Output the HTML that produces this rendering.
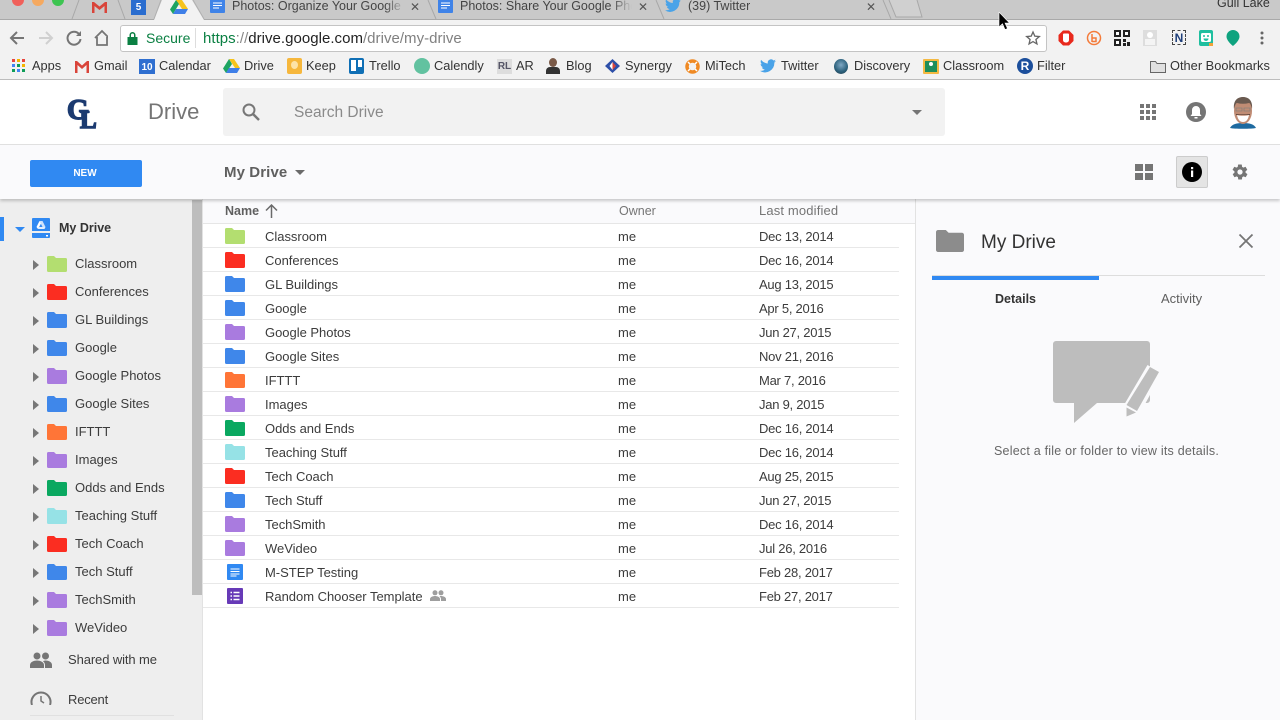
<!DOCTYPE html>
<html lang="en"><head><meta charset="utf-8"><title>My Drive - Google Drive</title>
<style>
html,body{margin:0;padding:0;width:1280px;height:720px;overflow:hidden;background:#fff;font-family:"Liberation Sans",sans-serif;color:#333}
*{box-sizing:border-box}
.a,.t,svg.i{position:absolute}
.t{white-space:nowrap}
.bk{position:absolute;top:56px;height:20px;line-height:20px;font-size:12.8px;color:#333;white-space:nowrap}
.tab{position:absolute;top:-1px;line-height:14px;font-size:12.5px;color:#444;white-space:nowrap;overflow:hidden}
.x{position:absolute;top:1px;font-size:12px;line-height:12px;color:#555}
.row{position:absolute;left:203px;width:696px;height:24px;border-bottom:1px solid #e8e8e8;line-height:26px;font-size:13px;color:#3c3c3c}
.row b{position:absolute;font-weight:normal;white-space:nowrap}
.row .n{left:62px;letter-spacing:-.02px}.row .o{left:415px}.row .d{left:556px;letter-spacing:-.25px}
.row svg{position:absolute;left:22px;top:4px}
.s{position:absolute;left:0;width:192px;height:28px;line-height:30px;font-size:13px;color:#3c3c3c}
.s i{position:absolute;left:33px;top:11px;width:0;height:0;border-left:6px solid #777;border-top:5px solid transparent;border-bottom:5px solid transparent}
.s svg{position:absolute;left:47px;top:7px}
.s span{position:absolute;left:75px;white-space:nowrap}
</style></head><body>
<svg width="0" height="0" style="position:absolute"><defs>
<symbol id="f" viewBox="0 0 20 16"><path d="M1.500 0H7l2 2h9.500A1.500 1.500 0 0 1 20 3.500v11a1.500 1.500 0 0 1-1.500 1.500h-17A1.500 1.500 0 0 1 0 14.500V1.500A1.500 1.500 0 0 1 1.500 0z" fill="currentColor"/></symbol>
</defs></svg>

<!-- tab strip -->
<div class="a" style="left:0;top:0;width:1280px;height:20px;background:#c9c9c9;border-bottom:1px solid #a9a9a9"></div>
<div class="a" style="left:12px;top:-6px;width:12px;height:12px;border-radius:50%;background:#f0605a"></div>
<div class="a" style="left:32px;top:-6px;width:12px;height:12px;border-radius:50%;background:#f5a960"></div>
<div class="a" style="left:52px;top:-6px;width:12px;height:12px;border-radius:50%;background:#3dc451"></div>
<svg class="i" style="left:0;top:0" width="930" height="20" fill="none" stroke="#a8a8a8">
<path d="M72 19L79 0M118 0L125 19M428 0L436 19M656 0L664 19M883 0L891 19"/>
<path d="M889 0L896 17H922L917 0" fill="#d0d0d0"/>
<path d="M154 20L162 0H192L204 20z" fill="#f2f2f2" stroke="none"/>
<path d="M154 19L161 0M193 0L204 19" stroke="#b0b0b0"/>
</svg>
<svg class="i" style="left:92px;top:1px" width="15" height="12"><path d="M0 1h2l5.500 4.500L13 1h2v11h-2.500V5L7.500 9 2.500 5v7H0z" fill="#d9443a"/></svg>
<div class="a" style="left:131px;top:0;width:15px;height:15px;background:#2a6dcf;color:#fff;font-size:10px;line-height:15px;text-align:center;font-weight:bold">5</div>
<svg class="i" style="left:170px;top:0" width="18" height="14"><path d="M6 0h6l6 9h-6z" fill="#f6c31c"/><path d="M6 0L0 9.500 3 14l6-10z" fill="#1da462"/><path d="M3 14h12l3-5H6z" fill="#3f7fe8"/></svg>
<svg class="i" style="left:210px;top:0" width="15" height="14"><path d="M0 0h15v12a1 1 0 0 1-1 1H1a1 1 0 0 1-1-1z" fill="#3f83e8"/><path d="M3 3h9M3 5.500h9M3 8h6" stroke="#fff"/></svg>
<div class="tab" style="left:232px;width:170px">Photos: Organize Your Google</div>
<div class="a" style="left:385px;top:0;width:20px;height:14px;background:linear-gradient(90deg,rgba(201,201,201,0),#c9c9c9)"></div>
<div class="x" style="left:410px">✕</div>
<svg class="i" style="left:438px;top:0" width="15" height="14"><path d="M0 0h15v12a1 1 0 0 1-1 1H1a1 1 0 0 1-1-1z" fill="#3f83e8"/><path d="M3 3h9M3 5.500h9M3 8h6" stroke="#fff"/></svg>
<div class="tab" style="left:460px;width:172px">Photos: Share Your Google Pho</div>
<div class="a" style="left:612px;top:0;width:20px;height:14px;background:linear-gradient(90deg,rgba(201,201,201,0),#c9c9c9)"></div>
<div class="x" style="left:638px">✕</div>
<svg class="i" style="left:665px;top:-2px" width="16" height="15" viewBox="0 0 24 20"><path d="M24 2.400a10 10 0 0 1-2.800.8A5 5 0 0 0 23.300.500a10 10 0 0 1-3.100 1.200 4.900 4.900 0 0 0-8.400 4.500A14 14 0 0 1 1.700.900a4.900 4.900 0 0 0 1.500 6.600 5 5 0 0 1-2.200-.600 4.900 4.900 0 0 0 3.900 4.900 5 5 0 0 1-2.200.1 4.900 4.900 0 0 0 4.600 3.400A10 10 0 0 1 0 17.300 14 14 0 0 0 21.500 4.900c1-.7 1.800-1.500 2.500-2.500z" fill="#4aa3e8"/></svg>
<div class="tab" style="left:688px">(39) Twitter</div>
<div class="x" style="left:866px">✕</div>
<div class="t" style="left:1217px;top:-4px;font-size:12.500px;line-height:14px;color:#333">Gull Lake</div>

<!-- address bar -->
<div class="a" style="left:0;top:20px;width:1280px;height:60px;background:#f2f2f2;border-bottom:1px solid #bdbdbd"></div>
<svg class="i" style="left:8px;top:28px" width="100" height="20" fill="none" stroke="#757575" stroke-width="2">
<path d="M16 10H3M9 4l-6 6 6 6"/>
<path d="M31 10h13M38 4l6 6-6 6" stroke="#d0d0d0"/>
<path d="M71 6a6.500 6.500 0 1 0 1.500 5"/><path d="M73 3v5h-5" fill="#757575" stroke="none"/>
<path d="M87 10l7-7 7 7M89 9v8h10V9" stroke-width="1.800"/>
</svg>
<div class="a" style="left:120px;top:25px;width:927px;height:27px;background:#fff;border:1px solid #c4c4c4;border-radius:3px"></div>
<svg class="i" style="left:127px;top:31px" width="11" height="14"><path d="M2.500 6V4a3 3 0 0 1 6 0v2H10.500v8H.5V6zM4 6h3V4a1.500 1.500 0 0 0-3 0z" fill="#0b8043" fill-rule="evenodd"/></svg>
<div class="t" style="left:146px;top:30px;line-height:17px;font-size:14px;color:#0b8043">Secure</div>
<div class="a" style="left:195px;top:28px;width:1px;height:20px;background:#ddd"></div>
<div class="t" style="left:203px;top:30px;line-height:17px;font-size:15px;letter-spacing:.03px;color:#0b8043">https<span style="color:#888">://</span><span style="color:#222">drive.google.com</span><span style="color:#808080">/drive/my-drive</span></div>
<svg class="i" style="left:1025px;top:30px" width="16" height="16" viewBox="0 0 24 24"><path d="M12 3l2.700 6.200 6.800.600-5.100 4.500 1.500 6.600L12 17.400l-5.900 3.500 1.500-6.600L2.500 9.800l6.800-.600z" fill="none" stroke="#666" stroke-width="2"/></svg>

<!-- extensions -->
<svg class="i" style="left:1058px;top:30px" width="16" height="16"><path d="M5 .5h6L15.500 5v6L11 15.500H5L.5 11V5z" fill="#e8291c"/><path d="M5 4.500a1 1 0 0 1 1-1h4a1 1 0 0 1 1 1V10a2.500 2.500 0 0 1-2.500 2.500h-1A2.500 2.500 0 0 1 5 10z" fill="#fff"/></svg>
<svg class="i" style="left:1086px;top:30px" width="16" height="16"><circle cx="8" cy="8" r="6.500" fill="none" stroke="#f47b3a" stroke-width="1.500"/><path d="M6 4v8M6 8h4v3.500H6" fill="none" stroke="#f47b3a" stroke-width="1.500"/></svg>
<svg class="i" style="left:1114px;top:30px" width="16" height="16"><path d="M0 0h7v7H0zM9 0h7v7H9zM0 9h7v7H0zM9 9h3v3H9zM13 12h3v4h-3zM9 13h3v3H9z" fill="#222"/><path d="M2 2h3v3H2zM11 2h3v3h-3zM2 11h3v3H2z" fill="#fff"/></svg>
<div class="a" style="left:1143px;top:30px;width:14px;height:16px;background:#ddd"></div>
<div class="a" style="left:1147px;top:32px;width:6px;height:6px;border-radius:50%;background:#fff"></div>
<div class="a" style="left:1145px;top:39px;width:10px;height:6px;background:#f4f4f4"></div>
<div class="a" style="left:1172px;top:30px;width:14px;height:15px;border:1px dashed #444;color:#1f3f7a;font-size:12px;font-weight:bold;line-height:14px;text-align:center">N</div>
<svg class="i" style="left:1198px;top:30px" width="16" height="16"><rect x="1" width="14" height="16" rx="2" fill="#1fbf9f"/><rect x="3" y="3" width="10" height="9" rx="1.500" fill="#fff"/><circle cx="6" cy="6" r="1" fill="#1fbf9f"/><circle cx="10" cy="6" r="1" fill="#1fbf9f"/><path d="M5.500 8.500h5a2.500 2.500 0 0 1-5 0z" fill="#1fbf9f"/><path d="M11 13h4v3h-4z" fill="#f1a33a"/></svg>
<svg class="i" style="left:1226px;top:30px" width="14" height="16"><path d="M7 0a6.500 6.500 0 0 1 6.500 6.500C13.500 11 7 16 7 16S.5 11 .5 6.500A6.500 6.500 0 0 1 7 0z" fill="#0fa37f"/></svg>
<svg class="i" style="left:1260px;top:30px" width="4" height="16"><circle cx="2" cy="3" r="1.500" fill="#666"/><circle cx="2" cy="8" r="1.500" fill="#666"/><circle cx="2" cy="13" r="1.500" fill="#666"/></svg>

<!-- cursor -->
<svg class="i" style="left:998px;top:12px;z-index:9" width="12" height="19"><path d="M1 0v15l3.500-3.300L7 17.500l2.500-1-2.500-5.500h4.500z" fill="#000" stroke="#fff" stroke-width=".6"/></svg>

<!-- bookmarks -->
<svg class="i" style="left:12px;top:59px" width="14" height="14"><rect width="3" height="3" fill="#e8453c"/><rect x="5" width="3" height="3" fill="#f4b400"/><rect x="10" width="3" height="3" fill="#e8453c"/><rect y="5" width="3" height="3" fill="#4285f4"/><rect x="5" y="5" width="3" height="3" fill="#0f9d58"/><rect x="10" y="5" width="3" height="3" fill="#f4b400"/><rect y="10" width="3" height="3" fill="#0f9d58"/><rect x="5" y="10" width="3" height="3" fill="#4285f4"/><rect x="10" y="10" width="3" height="3" fill="#0f9d58"/></svg>
<div class="bk" style="left:32px">Apps</div>
<svg class="i" style="left:75px;top:60px" width="14" height="13"><path d="M0 1h2l5 4.500L12 1h2v12h-2.500V5L7 9 2.500 5v8H0z" fill="#d9443a"/></svg>
<div class="bk" style="left:94px">Gmail</div>
<div class="a" style="left:139px;top:59px;width:16px;height:15px;background:#2f6fd0;color:#fff;font-size:10px;font-weight:bold;line-height:17px;text-align:center">10</div>
<div class="bk" style="left:159px">Calendar</div>
<svg class="i" style="left:223px;top:59px" width="17" height="14"><path d="M6 0h5l6 9h-5z" fill="#f6c31c"/><path d="M6 0L0 9.500 3 14l6-9z" fill="#1da462"/><path d="M3 14h11l3-5H6z" fill="#3f7fe8"/></svg>
<div class="bk" style="left:244px">Drive</div>
<div class="a" style="left:287px;top:58px;width:15px;height:16px;background:#f6b73c;border-radius:2px"></div>
<div class="a" style="left:291px;top:61px;width:7px;height:8px;border-radius:50%;background:#fde3a8"></div>
<div class="bk" style="left:306px">Keep</div>
<div class="a" style="left:349px;top:58px;width:15px;height:16px;background:#0f6fb5;border-radius:2px"></div>
<div class="a" style="left:351px;top:60px;width:5px;height:11px;background:#fff"></div>
<div class="a" style="left:358px;top:60px;width:4px;height:7px;background:#fff"></div>
<div class="bk" style="left:369px">Trello</div>
<div class="a" style="left:414px;top:58px;width:16px;height:16px;border-radius:50%;background:#62c2a0"></div>
<div class="bk" style="left:434px">Calendly</div>
<div class="a" style="left:497px;top:59px;width:15px;height:15px;background:#ddd;color:#556;font-size:10px;font-weight:bold;line-height:16px;text-align:center">RL</div>
<div class="bk" style="left:516px">AR</div>
<div class="a" style="left:549px;top:58px;width:8px;height:9px;border-radius:50%;background:#7a5a48"></div>
<div class="a" style="left:546px;top:67px;width:14px;height:7px;background:#333;border-radius:4px 4px 0 0"></div>
<div class="bk" style="left:566px">Blog</div>
<svg class="i" style="left:605px;top:59px" width="15" height="14"><path d="M7.500 0L15 7l-7.500 7L0 7z" fill="#2d4fa8"/><path d="M7.500 3L11 7l-3.500 4z" fill="#d9443a"/><path d="M7.500 3L4.500 7l3 4z" fill="#fff"/></svg>
<div class="bk" style="left:625px">Synergy</div>
<svg class="i" style="left:685px;top:59px" width="15" height="15"><circle cx="7.500" cy="7.500" r="5.500" fill="none" stroke="#f08a24" stroke-width="3.500"/><path d="M3 3l2 2M12 3l-2 2M3 12l2-2M12 12l-2-2" stroke="#fff" stroke-width="1.500"/></svg>
<div class="bk" style="left:705px">MiTech</div>
<svg class="i" style="left:760px;top:59px" width="16" height="14" viewBox="0 0 24 20"><path d="M24 2.400a10 10 0 0 1-2.800.8A5 5 0 0 0 23.300.500a10 10 0 0 1-3.100 1.200 4.900 4.900 0 0 0-8.400 4.500A14 14 0 0 1 1.700.900a4.900 4.900 0 0 0 1.500 6.600 5 5 0 0 1-2.200-.600 4.900 4.900 0 0 0 3.900 4.900 5 5 0 0 1-2.200.1 4.900 4.900 0 0 0 4.600 3.400A10 10 0 0 1 0 17.300 14 14 0 0 0 21.500 4.900c1-.7 1.800-1.500 2.500-2.500z" fill="#4aa3e8"/></svg>
<div class="bk" style="left:781px">Twitter</div>
<div class="a" style="left:834px;top:59px;width:14px;height:15px;border-radius:50%;background:radial-gradient(circle at 50% 40%,#7fa8c4,#2a5f7a 60%,#2b3d4a)"></div>
<div class="bk" style="left:854px">Discovery</div>
<div class="a" style="left:923px;top:59px;width:16px;height:15px;background:#f4b942;border-radius:1px"></div>
<div class="a" style="left:925px;top:61px;width:12px;height:11px;background:#1e8e5a"></div>
<div class="a" style="left:929px;top:62px;width:4px;height:4px;border-radius:50%;background:#fff"></div>
<div class="bk" style="left:943px">Classroom</div>
<div class="a" style="left:1017px;top:58px;width:16px;height:16px;border-radius:50%;background:#1c4f9c;color:#fff;font-weight:bold;font-size:12px;line-height:16px;text-align:center">R</div>
<div class="bk" style="left:1037px">Filter</div>
<svg class="i" style="left:1150px;top:60px" width="16" height="13"><path d="M.5 1.500h5l1.500 2h8.500v9H.500z" fill="#e0e0e0" stroke="#666"/></svg>
<div class="bk" style="left:1170px;letter-spacing:.02px">Other Bookmarks</div>

<!-- drive header -->
<div class="a" style="left:0;top:80px;width:1280px;height:65px;background:#fff;border-bottom:1px solid #e2e2e2"></div>
<svg class="i" style="left:62px;top:92px" width="40" height="42" font-family="Liberation Serif, serif" font-weight="bold" fill="#1b3a70" stroke="#1b3a70"><text x="5" y="27" font-size="28" stroke-width="1.500">G</text><text x="18" y="36" font-size="25" stroke-width="1.500">L</text></svg>
<div class="t" style="left:148px;top:99px;font-size:22px;line-height:26px;color:#757575">Drive</div>
<div class="a" style="left:223px;top:88px;width:722px;height:48px;background:#f2f2f2;border-radius:3px"></div>
<svg class="i" style="left:241px;top:102px" width="20" height="20" fill="none" stroke="#777" stroke-width="2"><circle cx="8" cy="8" r="5.500"/><path d="M12 12l6 6" stroke-width="2.400"/></svg>
<div class="t" style="left:294px;top:103px;font-size:15.500px;line-height:20px;color:#8a8a8a">Search Drive</div>
<div class="a" style="left:912px;top:110px;width:0;height:0;border-top:5px solid #757575;border-left:5px solid transparent;border-right:5px solid transparent"></div>
<svg class="i" style="left:1140px;top:104px" width="16" height="16" fill="#757575"><rect width="4" height="4"/><rect x="6" width="4" height="4"/><rect x="12" width="4" height="4"/><rect y="6" width="4" height="4"/><rect x="6" y="6" width="4" height="4"/><rect x="12" y="6" width="4" height="4"/><rect y="12" width="4" height="4"/><rect x="6" y="12" width="4" height="4"/><rect x="12" y="12" width="4" height="4"/></svg>
<svg class="i" style="left:1186px;top:102px" width="20" height="20"><circle cx="10" cy="10" r="10" fill="#757575"/><path d="M10 4a4 4 0 0 1 4 4v4l1.500 2h-11L6 12V8a4 4 0 0 1 4-4z" fill="#fff"/><rect x="8.500" y="15" width="3" height="1.500" fill="#fff"/></svg>
<svg class="i" style="left:1229px;top:96px" width="28" height="33"><path d="M1 32c2-4 7-5 13-5s11 1 13 5c-4 1-22 1-26 0z" fill="#1e6aa0"/><ellipse cx="14" cy="15" rx="9" ry="13" fill="#c08c74"/><path d="M5 13C4 4 9 1 14 1s10 3 9 12c-1-4-2-6-3-6-4 1-8 1-12 0-1 0-2 2-3 6z" fill="#6a5a50"/><path d="M7 12h6v3H7zM15 12h6v3h-6z" fill="none" stroke="#8a8078" stroke-width=".8"/><path d="M8 19c3 1 9 1 12 0-1 5-3 7-6 7s-5-2-6-7z" fill="#fff"/><path d="M7 18c2 .5 12 .5 14 0v1H7z" fill="#5c4238"/></svg>

<!-- toolbar -->
<div class="a" style="left:0;top:145px;width:1280px;height:54px;background:#fafafc;box-shadow:0 2px 3px rgba(0,0,0,.2);z-index:3"></div>
<div class="a" style="left:30px;top:160px;width:112px;height:27px;background:#3089f2;border-radius:2px;color:#fff;font-size:10px;font-weight:bold;line-height:28px;text-align:center;z-index:4;padding-right:2px">NEW</div>
<div class="t" style="left:224px;top:163px;font-size:15px;font-weight:bold;line-height:20px;color:#5f5f5f;z-index:4;letter-spacing:.1px">My Drive</div>
<div class="a" style="left:295px;top:170px;width:0;height:0;border-top:5px solid #6a6a6a;border-left:5px solid transparent;border-right:5px solid transparent;z-index:4"></div>
<svg class="i" style="left:1135px;top:164px;z-index:4" width="18" height="16" fill="#757575"><rect width="8" height="7"/><rect x="10" width="8" height="7"/><rect y="9" width="8" height="7"/><rect x="10" y="9" width="8" height="7"/></svg>
<div class="a" style="left:1176px;top:156px;width:32px;height:32px;background:#e4e4e4;border:1px solid #ccc;border-radius:2px;z-index:4"></div>
<svg class="i" style="left:1182px;top:162px;z-index:5" width="20" height="20"><circle cx="10" cy="10" r="10" fill="#000"/><rect x="9" y="8.500" width="2.200" height="6.500" fill="#fff"/><rect x="9" y="5" width="2.200" height="2.200" fill="#fff"/></svg>
<svg class="i" style="left:1231px;top:163px;z-index:4" width="18" height="18" viewBox="0 0 24 24"><path fill="#757575" d="M19.400 13a7.500 7.500 0 0 0 0-2l2.100-1.600a.5.500 0 0 0 .1-.6l-2-3.500a.5.500 0 0 0-.6-.2l-2.500 1a7.300 7.300 0 0 0-1.700-1l-.4-2.700a.5.500 0 0 0-.5-.4h-4a.5.500 0 0 0-.5.400l-.4 2.700a7.300 7.300 0 0 0-1.700 1l-2.500-1a.5.500 0 0 0-.6.2l-2 3.500a.5.500 0 0 0 .1.600L4.600 11a7.500 7.500 0 0 0 0 2l-2.100 1.600a.5.500 0 0 0-.1.600l2 3.500c.1.200.4.300.6.2l2.500-1c.5.400 1.100.7 1.700 1l.4 2.700c0 .2.200.4.500.4h4c.3 0 .5-.2.500-.4l.4-2.700c.6-.3 1.200-.6 1.700-1l2.500 1c.2.100.5 0 .6-.2l2-3.500a.5.500 0 0 0-.1-.6zM12 15.500a3.500 3.500 0 1 1 0-7 3.500 3.500 0 0 1 0 7z"/></svg>

<!-- sidebar -->
<div class="a" style="left:0;top:199px;width:203px;height:521px;background:#eee;border-right:1px solid #e2e2e2"></div>
<div class="a" style="left:192px;top:200px;width:10px;height:395px;background:#bdbdbd"></div>
<div class="a" style="left:0;top:217px;width:4px;height:24px;background:#3089f2"></div>
<div class="a" style="left:15px;top:227px;width:0;height:0;border-top:5px solid #3089f2;border-left:5px solid transparent;border-right:5px solid transparent"></div>
<svg class="i" style="left:32px;top:218px" width="18" height="20"><path d="M1 0h16a1 1 0 0 1 1 1v12H0V1a1 1 0 0 1 1-1z" fill="#3089f2"/><path d="M0 15h18v4a1 1 0 0 1-1 1H1a1 1 0 0 1-1-1z" fill="#3089f2"/><rect x="14" y="17" width="2" height="1.500" fill="#fff"/><path d="M7.500 3h3l3 6h-3z" fill="#cfe2fb"/><path d="M7.500 3L4.500 9l1.500 2 3-5.500z" fill="#fff"/><path d="M6 11h6.500l1-2H7z" fill="#e3eefd"/></svg>
<div class="t" style="left:59px;top:219px;font-size:12.500px;font-weight:bold;line-height:18px;color:#333">My Drive</div>

<div class="s" style="top:249px"><i></i><svg width="20" height="16" color="#b3de70"><use href="#f"/></svg><span>Classroom</span></div>
<div class="s" style="top:277px"><i></i><svg width="20" height="16" color="#fb2d21"><use href="#f"/></svg><span>Conferences</span></div>
<div class="s" style="top:305px"><i></i><svg width="20" height="16" color="#3f87ea"><use href="#f"/></svg><span>GL Buildings</span></div>
<div class="s" style="top:333px"><i></i><svg width="20" height="16" color="#3f87ea"><use href="#f"/></svg><span>Google</span></div>
<div class="s" style="top:361px"><i></i><svg width="20" height="16" color="#a97bdf"><use href="#f"/></svg><span>Google Photos</span></div>
<div class="s" style="top:389px"><i></i><svg width="20" height="16" color="#3f87ea"><use href="#f"/></svg><span>Google Sites</span></div>
<div class="s" style="top:417px"><i></i><svg width="20" height="16" color="#ff7537"><use href="#f"/></svg><span>IFTTT</span></div>
<div class="s" style="top:445px"><i></i><svg width="20" height="16" color="#a97bdf"><use href="#f"/></svg><span>Images</span></div>
<div class="s" style="top:473px"><i></i><svg width="20" height="16" color="#0aa860"><use href="#f"/></svg><span>Odds and Ends</span></div>
<div class="s" style="top:501px"><i></i><svg width="20" height="16" color="#96e2e6"><use href="#f"/></svg><span>Teaching Stuff</span></div>
<div class="s" style="top:529px"><i></i><svg width="20" height="16" color="#fb2d21"><use href="#f"/></svg><span>Tech Coach</span></div>
<div class="s" style="top:557px"><i></i><svg width="20" height="16" color="#3f87ea"><use href="#f"/></svg><span>Tech Stuff</span></div>
<div class="s" style="top:585px"><i></i><svg width="20" height="16" color="#a97bdf"><use href="#f"/></svg><span>TechSmith</span></div>
<div class="s" style="top:613px"><i></i><svg width="20" height="16" color="#a97bdf"><use href="#f"/></svg><span>WeVideo</span></div>

<svg class="i" style="left:30px;top:652px" width="22" height="16" fill="#757575"><circle cx="7" cy="4" r="3.500"/><circle cx="15.500" cy="4" r="3.500"/><path d="M0 16v-3c0-3 4-4.500 7-4.500s7 1.500 7 4.500v3z"/><path d="M15 16v-3c0-1.700-.8-3-2-3.800.9-.4 1.800-.7 2.500-.7 3 0 6.500 1.500 6.500 4.500v3z"/></svg>
<div class="t" style="left:68px;top:651px;font-size:13px;line-height:18px;color:#3c3c3c;letter-spacing:-.1px">Shared with me</div>
<svg class="i" style="left:30px;top:690px" width="22" height="15" fill="none" stroke="#757575" stroke-width="2"><path d="M2 15A9.500 9.500 0 1 1 20 15"/><path d="M11 6v5l3 2" stroke-width="1.500"/></svg>
<div class="t" style="left:68px;top:691px;font-size:13px;line-height:18px;color:#3c3c3c;letter-spacing:-.2px">Recent</div>
<div class="a" style="left:30px;top:715px;width:144px;height:1px;background:#e0e0e0"></div>

<!-- list header -->
<div class="a" style="left:203px;top:199px;width:712px;height:25px;background:#fafafc;border-bottom:1px solid #e6e6e6"></div>
<div class="t" style="left:225px;top:202px;font-size:12.500px;font-weight:bold;line-height:18px;color:#5f5f5f">Name</div>
<svg class="i" style="left:265px;top:204px" width="13" height="14" fill="none" stroke="#6a6a6a" stroke-width="1.500"><path d="M6.500 14V1M1 6.500L6.500 1 12 6.500"/></svg>
<div class="t" style="left:619px;top:202px;font-size:12.500px;line-height:18px;color:#757575">Owner</div>
<div class="t" style="left:759px;top:202px;font-size:13px;line-height:18px;color:#757575;letter-spacing:.15px">Last modified</div>

<!-- rows -->
<div class="row" style="top:224px"><svg width="20" height="16" color="#b3de70"><use href="#f"/></svg><b class="n">Classroom</b><b class="o">me</b><b class="d">Dec 13, 2014</b></div>
<div class="row" style="top:248px"><svg width="20" height="16" color="#fb2d21"><use href="#f"/></svg><b class="n">Conferences</b><b class="o">me</b><b class="d">Dec 16, 2014</b></div>
<div class="row" style="top:272px"><svg width="20" height="16" color="#3f87ea"><use href="#f"/></svg><b class="n">GL Buildings</b><b class="o">me</b><b class="d">Aug 13, 2015</b></div>
<div class="row" style="top:296px"><svg width="20" height="16" color="#3f87ea"><use href="#f"/></svg><b class="n">Google</b><b class="o">me</b><b class="d">Apr 5, 2016</b></div>
<div class="row" style="top:320px"><svg width="20" height="16" color="#a97bdf"><use href="#f"/></svg><b class="n">Google Photos</b><b class="o">me</b><b class="d">Jun 27, 2015</b></div>
<div class="row" style="top:344px"><svg width="20" height="16" color="#3f87ea"><use href="#f"/></svg><b class="n">Google Sites</b><b class="o">me</b><b class="d">Nov 21, 2016</b></div>
<div class="row" style="top:368px"><svg width="20" height="16" color="#ff7537"><use href="#f"/></svg><b class="n">IFTTT</b><b class="o">me</b><b class="d">Mar 7, 2016</b></div>
<div class="row" style="top:392px"><svg width="20" height="16" color="#a97bdf"><use href="#f"/></svg><b class="n">Images</b><b class="o">me</b><b class="d">Jan 9, 2015</b></div>
<div class="row" style="top:416px"><svg width="20" height="16" color="#0aa860"><use href="#f"/></svg><b class="n">Odds and Ends</b><b class="o">me</b><b class="d">Dec 16, 2014</b></div>
<div class="row" style="top:440px"><svg width="20" height="16" color="#96e2e6"><use href="#f"/></svg><b class="n">Teaching Stuff</b><b class="o">me</b><b class="d">Dec 16, 2014</b></div>
<div class="row" style="top:464px"><svg width="20" height="16" color="#fb2d21"><use href="#f"/></svg><b class="n">Tech Coach</b><b class="o">me</b><b class="d">Aug 25, 2015</b></div>
<div class="row" style="top:488px"><svg width="20" height="16" color="#3f87ea"><use href="#f"/></svg><b class="n">Tech Stuff</b><b class="o">me</b><b class="d">Jun 27, 2015</b></div>
<div class="row" style="top:512px"><svg width="20" height="16" color="#a97bdf"><use href="#f"/></svg><b class="n">TechSmith</b><b class="o">me</b><b class="d">Dec 16, 2014</b></div>
<div class="row" style="top:536px"><svg width="20" height="16" color="#a97bdf"><use href="#f"/></svg><b class="n">WeVideo</b><b class="o">me</b><b class="d">Jul 26, 2016</b></div>
<div class="row" style="top:560px"><svg width="16" height="16" style="left:24px;top:4px"><rect width="16" height="16" rx="1" fill="#3089f2"/><path d="M3.500 5h9M3.500 7.500h9M3.500 10h9M3.500 12h6" stroke="#fff" stroke-width="1"/></svg><b class="n">M-STEP Testing</b><b class="o">me</b><b class="d">Feb 28, 2017</b></div>
<div class="row" style="top:584px"><svg width="16" height="16" style="left:24px;top:4px"><rect width="16" height="16" rx="1" fill="#673ab7"/><path d="M6.500 4.500h6M6.500 8h6M6.500 11.500h6" stroke="#fff" stroke-width="1.400"/><path d="M3.500 4.500h1.500M3.500 8h1.500M3.500 11.500h1.500" stroke="#fff" stroke-width="1.400"/></svg><b class="n">Random Chooser Template</b><svg width="16" height="11" style="left:227px;top:6px" fill="#9e9e9e"><circle cx="5" cy="2.800" r="2.500"/><circle cx="11" cy="2.800" r="2.500"/><path d="M0 11V9c0-2 3-3 5-3s5 1 5 3v2z"/><path d="M11 11V9c0-1-.5-2-1.500-2.800.6-.2 1-.2 1.500-.2 2 0 5 1 5 3v2z"/></svg><b class="o">me</b><b class="d">Feb 27, 2017</b></div>

<!-- details -->
<div class="a" style="left:915px;top:199px;width:365px;height:521px;background:#fafafc;border-left:1px solid #e2e2e2"></div>
<svg class="i" style="left:936px;top:230px" width="28" height="22" viewBox="0 0 20 16" preserveAspectRatio="none" color="#8c8c8c"><use href="#f"/></svg>
<div class="t" style="left:981px;top:231px;font-size:19px;line-height:24px;color:#333">My Drive</div>
<svg class="i" style="left:1238px;top:233px" width="16" height="16" stroke="#757575" stroke-width="1.800"><path d="M1.500 1.500l13 13M14.500 1.500l-13 13"/></svg>
<div class="a" style="left:932px;top:275px;width:333px;height:1px;background:#ddd"></div>
<div class="a" style="left:932px;top:276px;width:167px;height:4px;background:#3089f2"></div>
<div class="t" style="left:995px;top:290px;font-size:12.500px;font-weight:bold;line-height:18px;color:#333">Details</div>
<div class="t" style="left:1161px;top:290px;font-size:13px;line-height:18px;color:#5f5f5f">Activity</div>
<svg class="i" style="left:1040px;top:330px" width="130" height="100" viewBox="1040 330 130 100">
<path d="M1056 341H1147a3 3 0 0 1 3 3V400a3 3 0 0 1-3 3H1097L1074 423V403H1056a3 3 0 0 1-3-3V344a3 3 0 0 1 3-3z" fill="#bdbdbd"/>
<path d="M1147.500 365L1162 373 1139 415 1124 415 1124 405z" fill="#fafafc"/>
<path d="M1150 367L1159 372 1137 411 1126.500 405z" fill="#bdbdbd"/>
<path d="M1126.500 407.500L1136 412.500 1126.500 416.500z" fill="#bdbdbd"/>
</svg>
<div class="t" style="left:994px;top:442px;font-size:12.500px;line-height:18px;color:#666;letter-spacing:.22px">Select a file or folder to view its details.</div>
</body></html>
